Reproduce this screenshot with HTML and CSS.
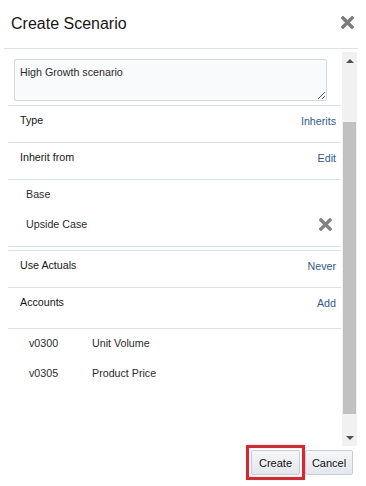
FILE: index.html
```html
<!DOCTYPE html>
<html lang="en">
<head>
    <meta charset="UTF-8">
    <title>Create Scenario</title>
    <link rel="stylesheet" href="styles.css">
</head>
<body>
    <div class="dialog">
        <!-- 标题栏 -->
        <div class="dialog-header">
            <h1 class="dialog-title">Create Scenario</h1>
            <span class="close-btn">
                <svg width="13" height="13" viewBox="0 0 13 13"><path d="M2 2 L11 11 M11 2 L2 11" stroke="#7b7b7b" stroke-width="3.4" stroke-linecap="square"/></svg>
            </span>
        </div>

        <div class="dialog-body">
            <div class="dialog-content">
                <div class="desc-wrap">
                    <textarea class="desc-input">High Growth scenario</textarea>
                </div>

                <div class="row">
                    <span class="row-label">Type</span>
                    <a class="row-link">Inherits</a>
                </div>
                <div class="row">
                    <span class="row-label">Inherit from</span>
                    <a class="row-link">Edit</a>
                </div>
                <div class="sub-list">
                    <div class="sub-item">Base</div>
                    <div class="sub-item">
                        <span>Upside Case</span>
                        <svg class="remove-icon" width="13" height="13" viewBox="0 0 13 13"><path d="M2 2 L11 11 M11 2 L2 11" stroke="#838383" stroke-width="3.4" stroke-linecap="square"/></svg>
                    </div>
                </div>

                <div class="row row-top">
                    <span class="row-label">Use Actuals</span>
                    <a class="row-link">Never</a>
                </div>
                <div class="row row-tall">
                    <span class="row-label">Accounts</span>
                    <a class="row-link">Add</a>
                </div>
                <div class="account-list">
                    <div class="account-item"><span class="account-code">v0300</span><span>Unit Volume</span></div>
                    <div class="account-item"><span class="account-code">v0305</span><span>Product Price</span></div>
                </div>
            </div>

            <!-- 滚动条 -->
            <div class="scrollbar">
                <span class="arrow arrow-up"></span>
                <div class="scroll-track"><div class="scroll-thumb"></div></div>
                <span class="arrow arrow-down"></span>
            </div>
        </div>

        <div class="dialog-footer">
            <span class="highlight"><button class="btn btn-create">Create</button></span>
            <button class="btn btn-cancel">Cancel</button>
        </div>
    </div>
</body>
</html>
```

FILE: styles.css
```css
/* 基础样式 */
* {
    margin: 0;
    padding: 0;
    box-sizing: border-box;
}

html, body {
    background-color: white;
    color: #2b2b2b;
    font-family: 'Liberation Sans', Arial, sans-serif;
    font-size: 10.7px;
    line-height: 15px;
}

.dialog {
    width: 354px;
    margin-left: 4px;
}

/* 标题栏 */
.dialog-header {
    height: 49px;
    padding: 13px 4px 0 7px;
    display: flex;
    justify-content: space-between;
    align-items: flex-start;
    border-bottom: 1px solid #dce2e9;
}

.dialog-title {
    font-size: 16px;
    line-height: 21px;
    font-weight: normal;
    color: #161616;
}

.close-btn {
    display: block;
    margin-top: 3px;
    height: 13px;
}

.close-btn svg, .remove-icon {
    display: block;
}

/* 内容区 */
.dialog-body {
    display: flex;
    height: 397px;
    padding-left: 4px;
}

.dialog-content {
    width: 333px;
    padding-top: 10px;
}

.desc-wrap {
    padding: 0 14px 4px 6px;
    border-bottom: 1px solid #dce2e9;
}

.desc-input {
    display: block;
    width: 313px;
    height: 42px;
    padding: 5px;
    border: 1px solid #d3d9df;
    border-radius: 2px;
    background-color: #f8fafc;
    font-family: inherit;
    font-size: 10.7px;
    line-height: 15px;
    color: #2b2b2b;
    outline: none;
}

.row {
    display: flex;
    justify-content: space-between;
    padding: 7px 5px 0 12px;
    border-bottom: 1px solid #dce2e9;
    height: 37px;
}

.row-top {
    margin-top: 3px;
    border-top: 1px solid #dce2e9;
    height: 38px;
}

.row-tall {
    height: 41px;
}

.row-label {
    color: #161616;
}

.row-link {
    color: #2c5d90;
    padding-top: 1px;
}

.sub-list {
    padding: 7px 9px 14px 18px;
    border-bottom: 1px solid #dce2e9;
    display: flex;
    flex-direction: column;
    gap: 15px;
}

.sub-item {
    display: flex;
    justify-content: space-between;
    align-items: center;
    height: 15px;
}

.account-list {
    padding: 7px 0 0 21px;
    display: flex;
    flex-direction: column;
    gap: 15px;
}

.account-item {
    display: flex;
    height: 15px;
}

.account-code {
    width: 63px;
}

/* 滚动条 */
.scrollbar {
    width: 15px;
    margin: 3px 0 0 1px;
    background-color: #f1f1f1;
    display: flex;
    flex-direction: column;
    align-items: center;
}

.arrow {
    display: block;
    width: 0;
    height: 0;
    border-left: 4px solid transparent;
    border-right: 4px solid transparent;
}

.arrow-up {
    margin-top: 7px;
    border-bottom: 4px solid #505050;
}

.arrow-down {
    margin-bottom: 6px;
    border-top: 4px solid #505050;
}

.scroll-track {
    flex: 1;
    width: 100%;
    padding: 59px 1px 0 1px;
}

.scroll-thumb {
    height: 292px;
    background-color: #c1c1c1;
}

/* 底部按钮 */
.dialog-footer {
    display: flex;
    justify-content: flex-end;
    align-items: flex-start;
    padding: 0 5px 0 0;
    margin-top: -1px;
}

/* 红框标注 */
.highlight {
    display: block;
    border: 3px solid #e8202a;
    padding: 2px;
}

.btn {
    display: block;
    height: 25px;
    padding: 0;
    border: 1px solid #c6cfd7;
    border-radius: 2px;
    background: linear-gradient(#f5f7f9, #e3e7eb);
    font-family: inherit;
    font-size: 11px;
    color: #111;
}

.btn-create {
    width: 49px;
}

.btn-cancel {
    width: 48px;
    margin-top: 5px;
}
```
